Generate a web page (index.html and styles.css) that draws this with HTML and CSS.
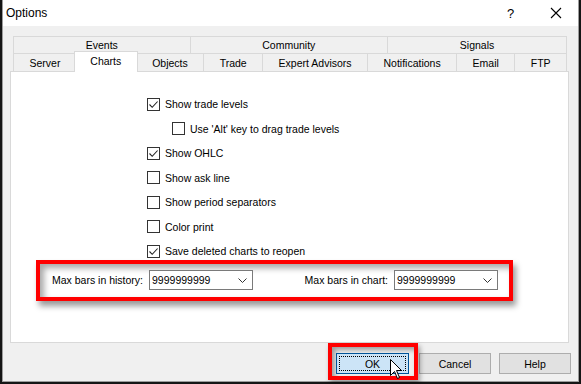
FILE: index.html
```html
<!DOCTYPE html>
<html>
<head>
	<title>Options</title>
	<meta charset="utf-8"/>
	<link rel="stylesheet" href="styles.css">
</head>
<body>
	<div class="dialog">
		<div class="titlebar">
			<span class="caption">Options</span>
			<span class="cap-btn">?</span>
			<span class="cap-btn">
				<svg width="12" height="12" viewBox="0 0 12 12"><path d="M1 1L11 11M11 1L1 11" stroke="#000" stroke-width="1.1" fill="none"/></svg>
			</span>
		</div>

		<div class="tabs">
			<div class="tab-row back">
				<div class="tab">Events</div>
				<div class="tab">Community</div>
				<div class="tab">Signals</div>
			</div>
			<div class="tab-row front">
				<div class="tab">Server</div>
				<div class="tab active">Charts</div>
				<div class="tab">Objects</div>
				<div class="tab">Trade</div>
				<div class="tab">Expert Advisors</div>
				<div class="tab">Notifications</div>
				<div class="tab">Email</div>
				<div class="tab">FTP</div>
			</div>
		</div>

		<div class="panel">
			<div class="checks">
				<div class="check"><span class="box on"><svg width="11" height="11" viewBox="0 0 11 11"><path d="M1.5 5.5L4.2 8.3L9.6 2.5" stroke="#222" stroke-width="1.1" fill="none"/></svg></span>Show trade levels</div>
				<div class="check sub"><span class="box"></span>Use 'Alt' key to drag trade levels</div>
				<div class="check"><span class="box on"><svg width="11" height="11" viewBox="0 0 11 11"><path d="M1.5 5.5L4.2 8.3L9.6 2.5" stroke="#222" stroke-width="1.1" fill="none"/></svg></span>Show OHLC</div>
				<div class="check"><span class="box"></span>Show ask line</div>
				<div class="check"><span class="box"></span>Show period separators</div>
				<div class="check"><span class="box"></span>Color print</div>
				<div class="check"><span class="box on"><svg width="11" height="11" viewBox="0 0 11 11"><path d="M1.5 5.5L4.2 8.3L9.6 2.5" stroke="#222" stroke-width="1.1" fill="none"/></svg></span>Save deleted charts to reopen</div>
			</div>

			<div class="mark wide">
				<div class="field">
					<span>Max bars in history:</span>
					<div class="combo">9999999999<svg width="9" height="5" viewBox="0 0 9 5"><path d="M0.5 0.5L4.5 4.5L8.5 0.5" stroke="#333" fill="none"/></svg></div>
				</div>
				<div class="field">
					<span>Max bars in chart:</span>
					<div class="combo">9999999999<svg width="9" height="5" viewBox="0 0 9 5"><path d="M0.5 0.5L4.5 4.5L8.5 0.5" stroke="#333" fill="none"/></svg></div>
				</div>
			</div>
		</div>

		<div class="footer">
			<div class="mark ok-mark">
				<div class="btn default">OK</div>
				<svg class="cursor" width="13" height="21" viewBox="0 0 13 21"><path d="M0.5 0.5L0.5 16.5L4.5 12.5L7.5 19.5L9.5 18.5L6.5 11.5L11.5 11.5Z" fill="#fff" stroke="#000" stroke-linejoin="round"/></svg>
			</div>
			<div class="btn">Cancel</div>
			<div class="btn">Help</div>
		</div>
	</div>
</body>
</html>
```

FILE: styles.css
```css
*{
	box-sizing: border-box;
}

html,body{
	margin: 0;
	padding: 0;
}

body{
	width: 581px;
	height: 384px;
	overflow: hidden;
	background: #151515;
	font-family: "Liberation Sans", Arial, sans-serif;
	font-size: 10.5px;
	color: #000;
}

.dialog{
	margin-left: 2px;
	width: 577px;
	height: 382px;
	background: #f0f0f0;
	border: 1px solid #9c9c9c;
	border-top: 0;
	display: flex;
	flex-direction: column;
}

.titlebar{
	height: 26px;
	background: #fff;
	display: flex;
	align-items: center;
	padding-left: 3px;
}

.caption{
	font-size: 12px;
	flex: 1;
}

.cap-btn{
	width: 45px;
	height: 26px;
	display: flex;
	align-items: center;
	justify-content: center;
	font-size: 13px;
}

.tabs{
	margin: 10px 0 0 10px;
	width: 554px;
}

.tab-row{
	display: flex;
}

.tab-row.back{
	height: 17px;
}

.tab-row.front{
	height: 18px;
}

.tab{
	flex: 1 1 auto;
	border: 1px solid #d9d9d9;
	border-bottom: 0;
	border-right: 0;
	display: flex;
	align-items: center;
	justify-content: center;
	white-space: nowrap;
}

.tab:last-child{
	border-right: 1px solid #d9d9d9;
}

.tab.active{
	position: relative;
	z-index: 1;
	background: #fff;
	margin: -2px -2px -1px -2px;
	border-right: 1px solid #d9d9d9;
	padding-bottom: 3px;
}

.panel{
	margin-left: 7px;
	width: 559px;
	height: 272px;
	background: #fff;
	border: 1px solid #d9d9d9;
	padding-top: 20px;
}

.checks{
	padding-left: 136px;
}

.check{
	height: 24.5px;
	display: flex;
	align-items: center;
}

.check.sub{
	padding-left: 25px;
}

.box{
	width: 13px;
	height: 13px;
	border: 1px solid #333;
	background: #fff;
	margin-right: 5px;
	display: flex;
	align-items: center;
	justify-content: center;
}

.mark{
	border: 4px solid #f00;
}

.mark.wide{
	margin: -4px 0 0 25px;
	width: 477px;
	height: 41px;
	display: flex;
	align-items: center;
	justify-content: space-between;
	padding: 0 11px 0 12px;
	box-shadow: 3px 5px 6px rgba(0,0,0,.4), inset 4px 4px 6px rgba(0,0,0,.35);
}

.field{
	display: flex;
	align-items: center;
	gap: 6px;
}

.combo{
	width: 104px;
	height: 20px;
	border: 1px solid #7a7a7a;
	background: #fff;
	display: flex;
	align-items: center;
	justify-content: space-between;
	padding: 0 5px 0 2px;
}

.footer{
	flex: 1;
	display: flex;
	justify-content: flex-end;
	align-items: flex-start;
	padding-right: 7px;
}

.ok-mark{
	position: relative;
	width: 90px;
	height: 37px;
	padding: 6px 5px 0 4px;
	box-shadow: 2px 3px 5px rgba(0,0,0,.35), inset 3px 3px 5px rgba(0,0,0,.35);
}

.btn{
	width: 72px;
	height: 21px;
	margin-top: 10px;
	margin-left: 8px;
	background: #e1e1e1;
	border: 1px solid #adadad;
	display: flex;
	align-items: center;
	justify-content: center;
}

.ok-mark + .btn{
	margin-left: 1px;
}

.btn.default{
	position: relative;
	width: 73px;
	margin: 0;
	background: #cce4f7;
	border-color: #005499;
}

.btn.default::after{
	content: "";
	position: absolute;
	left: 2px;
	top: 2px;
	right: 2px;
	bottom: 2px;
	border: 1px dotted #000;
}

.cursor{
	position: absolute;
	left: 58px;
	top: 12px;
}
```
